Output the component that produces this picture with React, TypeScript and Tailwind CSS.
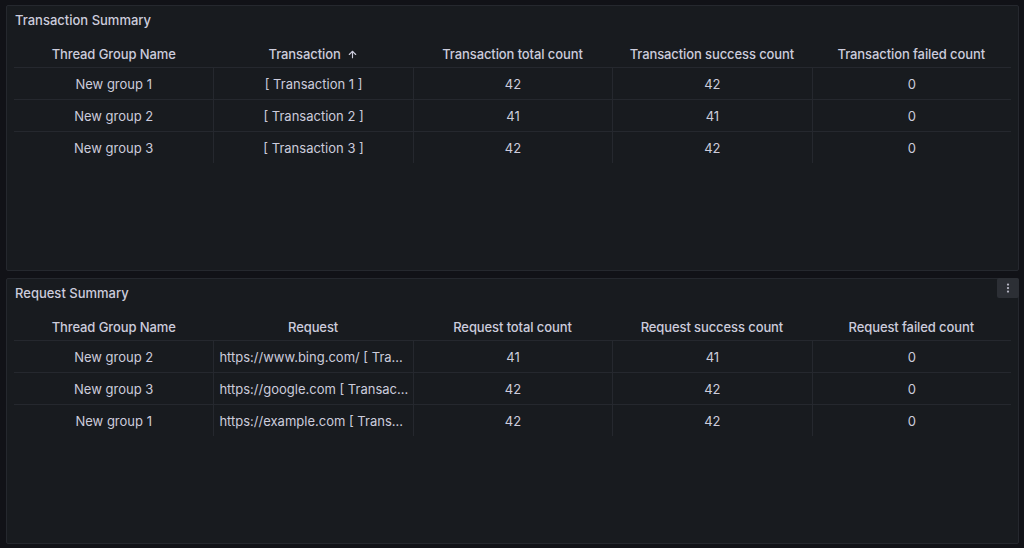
import React from 'react';
import { ArrowUp, EllipsisVertical } from 'lucide-react';

type Row = { group: string; name: string; total: number; success: number; failed: number };

const transactionRows: Row[] = [
  { group: 'New group 1', name: '[ Transaction 1 ]', total: 42, success: 42, failed: 0 },
  { group: 'New group 2', name: '[ Transaction 2 ]', total: 41, success: 41, failed: 0 },
  { group: 'New group 3', name: '[ Transaction 3 ]', total: 42, success: 42, failed: 0 },
];

// names shown as the panel clips them
const requestRows: Row[] = [
  { group: 'New group 2', name: 'https://www.bing.com/ [ Tra...', total: 41, success: 41, failed: 0 },
  { group: 'New group 3', name: 'https://google.com [ Transac...', total: 42, success: 42, failed: 0 },
  { group: 'New group 1', name: 'https://example.com [ Trans...', total: 42, success: 42, failed: 0 },
];

const SummaryPanel = ({
  title,
  headers,
  rows,
  sorted,
  leftName,
  menu,
}: {
  title: string;
  headers: string[];
  rows: Row[];
  sorted?: boolean;
  leftName?: boolean;
  menu?: boolean;
}) => {
  return (
    <div className="relative h-[266px] bg-[#181b1f] border border-[#25282e] rounded-[2px] flex flex-col">
      {menu && (
        <div className="absolute top-[-1px] right-[-1px] w-[22px] h-[20px] bg-[#2c2f35] rounded-[2px] flex items-center justify-center">
          <EllipsisVertical className="w-[12px] h-[12px] text-[#b8b8c6]" strokeWidth={2.5} />
        </div>
      )}
      <div className="h-[29px] flex items-center pl-[8px] text-[13px] font-medium text-[#ccccdc]">{title}</div>
      <div className="px-[7px] pt-[5px]">
        <div className="grid grid-cols-5 h-[27px] pt-[2px] items-center text-[13px] font-medium text-[#ccccdc] tracking-[-0.1px]">
          {headers.map((h, i) => (
            <div key={h} className="flex items-center justify-center gap-[6px]">
              {h}
              {sorted && i === 1 && <ArrowUp className="w-[11px] h-[11px]" strokeWidth={2.5} />}
            </div>
          ))}
        </div>
        {rows.map((r) => (
          <div key={r.group} className="grid grid-cols-5 h-[32px] border-t border-[#25282e] text-[13px] text-[#ccccdc]">
            <div className="flex items-center justify-center pt-[2px]">{r.group}</div>
            <div
              className={`flex items-center border-l border-[#25282e] min-w-0 whitespace-nowrap pt-[2px] ${
                leftName ? 'justify-start pl-[5px]' : 'justify-center'
              }`}
            >
              {r.name}
            </div>
            <div className="flex items-center justify-center border-l border-[#25282e] pt-[2px]">{r.total}</div>
            <div className="flex items-center justify-center border-l border-[#25282e] pt-[2px]">{r.success}</div>
            <div className="flex items-center justify-center border-l border-[#25282e] pt-[2px]">{r.failed}</div>
          </div>
        ))}
      </div>
    </div>
  );
};

const App = () => {
  return (
    <div className="w-[1024px] h-[548px] bg-[#111217] px-[6px] pt-[5px] flex flex-col gap-[7px] font-['Inter',sans-serif] overflow-hidden">
      <div className="w-[1013px]">
        <SummaryPanel
          title="Transaction Summary"
          headers={[
            'Thread Group Name',
            'Transaction',
            'Transaction total count',
            'Transaction success count',
            'Transaction failed count',
          ]}
          rows={transactionRows}
          sorted
        />
      </div>
      <div className="w-[1013px]">
        <SummaryPanel
          title="Request Summary"
          headers={[
            'Thread Group Name',
            'Request',
            'Request total count',
            'Request success count',
            'Request failed count',
          ]}
          rows={requestRows}
          leftName
          menu
        />
      </div>
    </div>
  );
};

export default App;
